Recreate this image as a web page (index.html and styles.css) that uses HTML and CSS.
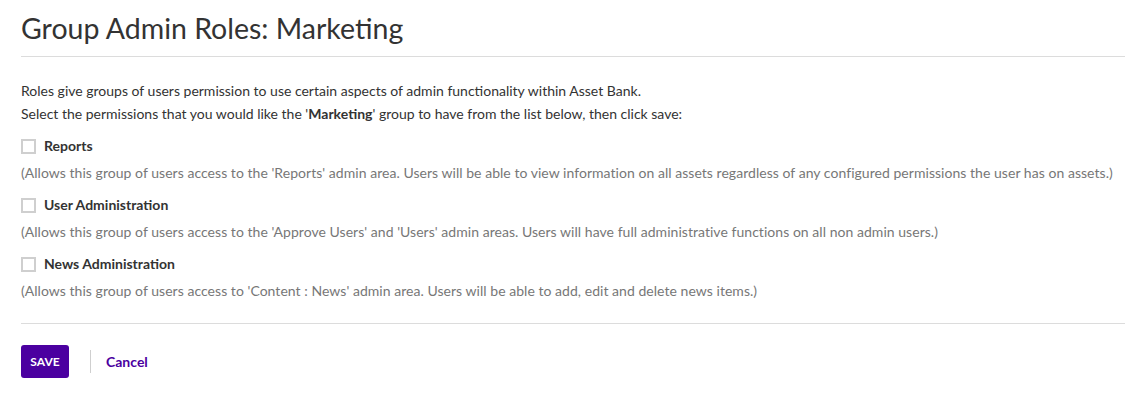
FILE: index.html
```html
<!DOCTYPE html>
<html lang="en">
<head>
<meta charset="utf-8">
<title>Group Admin Roles: Marketing</title>
<link rel="stylesheet" href="styles.css">
</head>
<body>
<div class="page">
  <h1 class="title">Group Admin Roles: Marketing</h1>
  <div class="intro">
    <p>Roles give groups of users permission to use certain aspects of admin functionality within Asset Bank.</p>
    <p>Select the permissions that you would like the '<strong>Marketing</strong>' group to have from the list below, then click save:</p>
  </div>
  <div class="roles">
    <div class="role">
      <label class="role-label"><span class="checkbox"></span>Reports</label>
      <p class="role-desc">(Allows this group of users access to the 'Reports' admin area. Users will be able to view information on all assets regardless of any configured permissions the user has on assets.)</p>
    </div>
    <div class="role">
      <label class="role-label"><span class="checkbox"></span>User Administration</label>
      <p class="role-desc">(Allows this group of users access to the 'Approve Users' and 'Users' admin areas. Users will have full administrative functions on all non admin users.)</p>
    </div>
    <div class="role">
      <label class="role-label"><span class="checkbox"></span>News Administration</label>
      <p class="role-desc">(Allows this group of users access to 'Content : News' admin area. Users will be able to add, edit and delete news items.)</p>
    </div>
  </div>
  <div class="actions">
    <button class="btn-save" type="button">SAVE</button>
    <span class="divider"></span>
    <a class="cancel" href="#">Cancel</a>
  </div>
</div>
</body>
</html>
```
FILE: styles.css
```css
html, body {
  margin: 0;
  padding: 0;
  background: #fff;
}
body {
  font-family: Lato, "Open Sans", sans-serif;
  font-size: 14px;
  color: #333;
}
.page {
  padding: 8px 0 0 21px;
}
.title {
  margin: 0;
  font-size: 28.5px;
  line-height: 40px;
  font-weight: 400;
  color: #333;
  padding-bottom: 8px;
  border-bottom: 1px solid #dcdcdc;
}
.intro {
  margin-top: 22px;
  line-height: 23px;
}
.intro p {
  margin: 0;
}
.intro strong {
  font-weight: 700;
}
.roles {
  margin-top: 10px;
  display: flex;
  flex-direction: column;
  gap: 10px;
}
.role-label {
  display: flex;
  align-items: center;
  gap: 8px;
  line-height: 22px;
  font-weight: 700;
  color: #333;
}
.checkbox {
  width: 11px;
  height: 11px;
  border: 2px solid #cfcfcf;
  background: #fff;
  flex: none;
}
.role-desc {
  margin: 5px 0 0;
  line-height: 22px;
  color: #777;
  letter-spacing: 0.04px;
}
.actions {
  margin-top: 21px;
  border-top: 1px solid #dcdcdc;
  padding-top: 21px;
  display: flex;
  align-items: center;
}
.btn-save {
  width: 48px;
  height: 33px;
  border: 0;
  border-radius: 3px;
  background: #4b00a0;
  color: #fff;
  font-family: inherit;
  font-weight: 700;
  font-size: 12px;
  padding: 0;
}
.divider {
  width: 1px;
  height: 23px;
  background: #cfcfcf;
  margin: 0 15px 0 21px;
}
.cancel {
  color: #4b00a0;
  text-decoration: none;
  font-weight: 700;
  font-size: 14px;
}
```
